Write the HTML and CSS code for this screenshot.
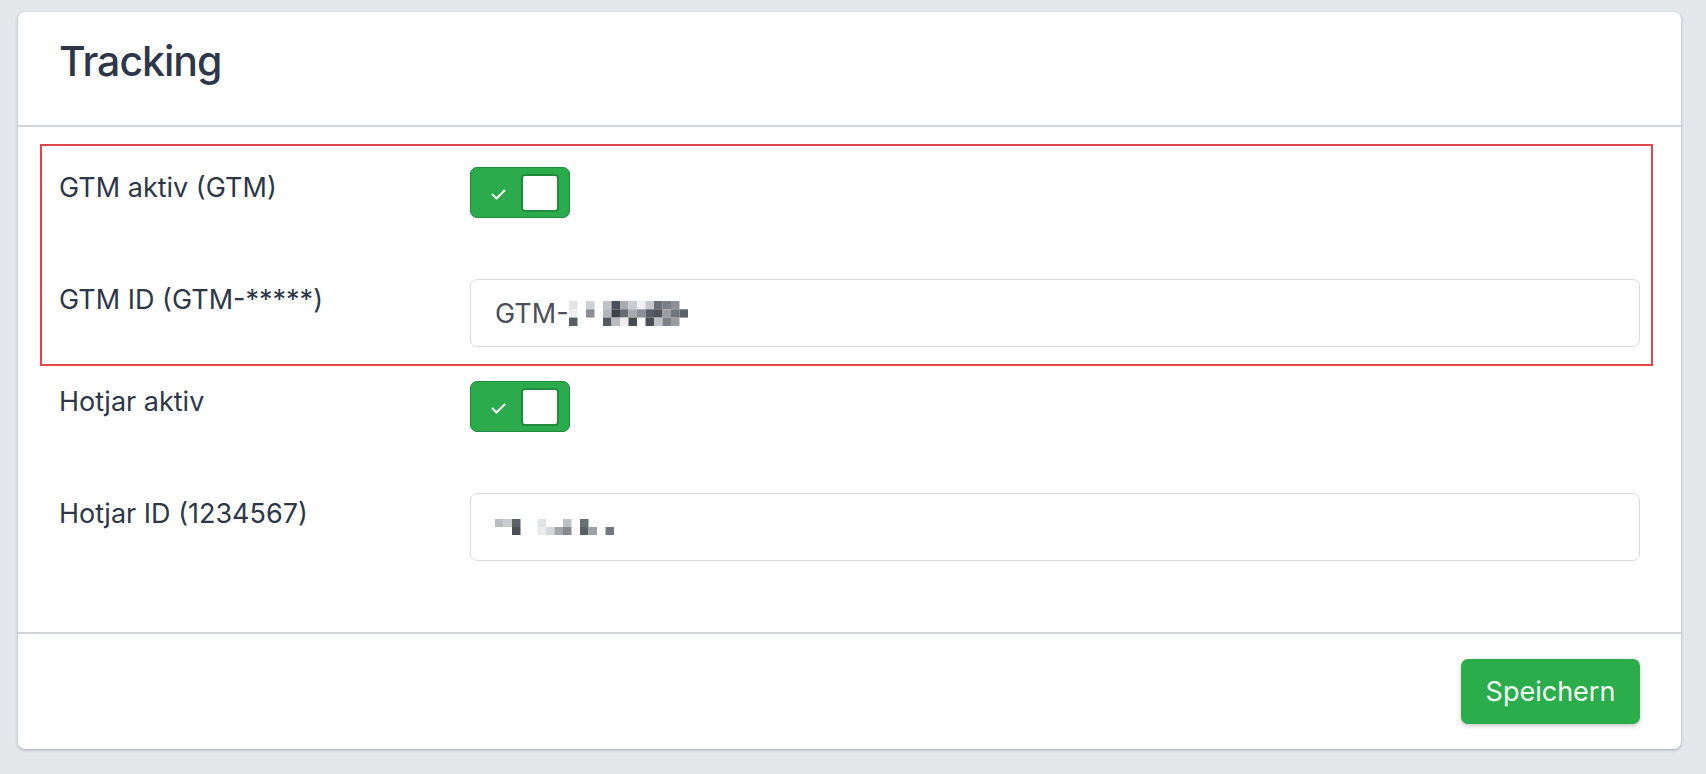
FILE: index.html
```html
<!DOCTYPE html>
<html lang="de">
<head>
<meta charset="utf-8">
<title>Tracking</title>
<link rel="stylesheet" href="styles.css">
</head>
<body>
<div class="card">
  <div class="card-header">
    <h1 class="title">Tracking</h1>
  </div>
  <div class="card-body">
    <div class="group highlighted">
      <div class="row row-toggle">
        <label class="label">GTM aktiv (GTM)</label>
        <div class="control">
          <span class="toggle">
            <svg class="check" width="15" height="11" viewBox="0 0 15 11"><polyline points="1.5,5.5 5.5,9.5 13.5,1.5" fill="none" stroke="#fff" stroke-width="2" stroke-linecap="round" stroke-linejoin="round"/></svg>
            <span class="knob"></span>
          </span>
        </div>
      </div>
      <div class="row">
        <label class="label">GTM ID (GTM-*****)</label>
        <div class="control">
          <div class="input"><span class="value">GTM-</span><svg class="mosaic" width="120" height="25" viewBox="0 0 120 25">
            <rect x="0" y="0" width="8.5" height="8.3" fill="#e4e4e6"/>
            <rect x="0" y="8.3" width="8.5" height="8.3" fill="#f0f0f2"/>
            <rect x="0" y="16.6" width="8.5" height="8.4" fill="#5a5e66"/>
            <rect x="17" y="0" width="8.5" height="8.3" fill="#cfd0d3"/>
            <rect x="17" y="8.3" width="8.5" height="8.3" fill="#8a8d93"/>
            <rect x="34" y="0" width="8.5" height="8.3" fill="#c0c2c6"/>
            <rect x="34" y="8.3" width="8.5" height="8.3" fill="#b3b5b9"/>
            <rect x="34" y="16.6" width="8.5" height="8.4" fill="#555960"/>
            <rect x="42.5" y="0" width="8.5" height="8.3" fill="#4b4f57"/>
            <rect x="42.5" y="8.3" width="8.5" height="8.3" fill="#3f434a"/>
            <rect x="42.5" y="16.6" width="8.5" height="8.4" fill="#b9bbbf"/>
            <rect x="51" y="0" width="8.5" height="8.3" fill="#a9abb0"/>
            <rect x="51" y="8.3" width="8.5" height="8.3" fill="#676b72"/>
            <rect x="51" y="16.6" width="8.5" height="8.4" fill="#eeeef0"/>
            <rect x="59.5" y="0" width="8.5" height="8.3" fill="#cbcdd0"/>
            <rect x="59.5" y="8.3" width="8.5" height="8.3" fill="#a7a9ae"/>
            <rect x="59.5" y="16.6" width="8.5" height="8.4" fill="#474b52"/>
            <rect x="68" y="0" width="8.5" height="8.3" fill="#eeeff1"/>
            <rect x="68" y="8.3" width="8.5" height="8.3" fill="#8b8e94"/>
            <rect x="76.5" y="0" width="8.5" height="8.3" fill="#c5c7cb"/>
            <rect x="76.5" y="8.3" width="8.5" height="8.3" fill="#585c63"/>
            <rect x="76.5" y="16.6" width="8.5" height="8.4" fill="#4a4e55"/>
            <rect x="85" y="0" width="8.5" height="8.3" fill="#6a6e75"/>
            <rect x="85" y="8.3" width="8.5" height="8.3" fill="#4f535a"/>
            <rect x="85" y="16.6" width="8.5" height="8.4" fill="#c0c2c6"/>
            <rect x="93.5" y="0" width="8.5" height="8.3" fill="#7b7f86"/>
            <rect x="93.5" y="8.3" width="8.5" height="8.3" fill="#9b9ea3"/>
            <rect x="93.5" y="16.6" width="8.5" height="8.4" fill="#7d8087"/>
            <rect x="102" y="0" width="8.5" height="8.3" fill="#8e9197"/>
            <rect x="102" y="8.3" width="8.5" height="8.3" fill="#71757c"/>
            <rect x="102" y="16.6" width="8.5" height="8.4" fill="#9a9da2"/>
            <rect x="110.5" y="8.3" width="8.5" height="8.3" fill="#5c6067"/>
          </svg></div>
        </div>
      </div>
    </div>
    <div class="row row-toggle">
      <label class="label">Hotjar aktiv</label>
      <div class="control">
        <span class="toggle">
          <svg class="check" width="15" height="11" viewBox="0 0 15 11"><polyline points="1.5,5.5 5.5,9.5 13.5,1.5" fill="none" stroke="#fff" stroke-width="2" stroke-linecap="round" stroke-linejoin="round"/></svg>
          <span class="knob"></span>
        </span>
      </div>
    </div>
    <div class="row">
      <label class="label">Hotjar ID (1234567)</label>
      <div class="control">
        <div class="input"><svg class="mosaic" width="124" height="16" viewBox="0 0 124 16">
          <rect x="0" y="0" width="8.5" height="8" fill="#b9bbbf"/>
          <rect x="8.5" y="0" width="8.5" height="8" fill="#c8cacd"/>
          <rect x="17" y="0" width="8.5" height="8" fill="#5c6067"/>
          <rect x="17" y="8" width="8.5" height="8" fill="#4a4e55"/>
          <rect x="42.5" y="0" width="8.5" height="8" fill="#e2e3e5"/>
          <rect x="42.5" y="8" width="8.5" height="8" fill="#ebebed"/>
          <rect x="51" y="8" width="8.5" height="8" fill="#d6d7da"/>
          <rect x="59.5" y="8" width="8.5" height="8" fill="#a4a6ab"/>
          <rect x="68" y="0" width="8.5" height="8" fill="#bfc1c5"/>
          <rect x="68" y="8" width="8.5" height="8" fill="#878a90"/>
          <rect x="85" y="0" width="8.5" height="8" fill="#6a6e75"/>
          <rect x="85" y="8" width="8.5" height="8" fill="#5a5e65"/>
          <rect x="93.5" y="8" width="8.5" height="8" fill="#9ea1a6"/>
          <rect x="110.5" y="8" width="8.5" height="8" fill="#74787f"/>
        </svg></div>
      </div>
    </div>
  </div>
  <div class="card-footer">
    <button class="btn" type="button">Speichern</button>
  </div>
</div>
</body>
</html>
```

FILE: styles.css
```css
* { box-sizing: border-box; }

html, body {
  margin: 0;
  padding: 0;
}

body {
  background: #e5e7eb;
  font-family: Inter, "Noto Sans", "Liberation Sans", sans-serif;
  color: #2d3748;
  padding: 12px 25px 24px 18px;
}

.card {
  background: #fff;
  border-radius: 7px;
  box-shadow: 0 1px 3px rgba(40, 50, 80, 0.35);
}

.card-header {
  height: 115px;
  padding: 24px 41px 0;
  border-bottom: 2px solid #d3d4d9;
}

.title {
  margin: 0;
  font-size: 41px;
  font-weight: 500;
  line-height: 50px;
  color: #2d3748;
  letter-spacing: -1px;
}

.card-body {
  padding: 40px 41px 37px;
}

.group {
  position: relative;
}

.highlighted::before {
  content: "";
  position: absolute;
  top: -23px;
  left: -19px;
  right: -13px;
  bottom: -19px;
  border: 2px solid #e0464c;
  pointer-events: none;
}

.row {
  display: grid;
  grid-template-columns: 411px 1fr;
  min-height: 68px;
  margin-bottom: 34px;
}

.row-toggle {
  min-height: 78px;
}

.label {
  font-size: 27px;
  line-height: 36px;
  padding-top: 3px;
  color: #2d3748;
}

.toggle {
  display: flex;
  align-items: center;
  justify-content: space-between;
  width: 100px;
  height: 51px;
  padding: 0 10px 0 20px;
  background: #2bab4b;
  border: 1.5px solid #1f8b3b;
  border-radius: 7px;
}

.check {
  display: block;
  margin-top: 3px;
}

.knob {
  width: 38px;
  height: 38px;
  background: #fff;
  border: 2px solid #1f8b3b;
  border-radius: 4px;
}

.input {
  display: flex;
  align-items: center;
  height: 68px;
  padding: 0 24px;
  border: 1.5px solid #dadbde;
  border-radius: 7px;
  background: #fff;
}

.value {
  font-size: 27px;
  color: #4b5058;
}

.mosaic {
  display: block;
}

.card-footer {
  display: flex;
  justify-content: flex-end;
  padding: 25px 41px 25px;
  border-top: 2px solid #d3d4d9;
}

.btn {
  width: 179px;
  height: 65px;
  border: none;
  border-radius: 7px;
  background: #2bad4c;
  color: #f2fff4;
  font-family: Inter, "Noto Sans", "Liberation Sans", sans-serif;
  font-size: 27px;
  box-shadow: 0 2px 4px rgba(0, 0, 0, 0.22);
  padding: 0;
}
```
